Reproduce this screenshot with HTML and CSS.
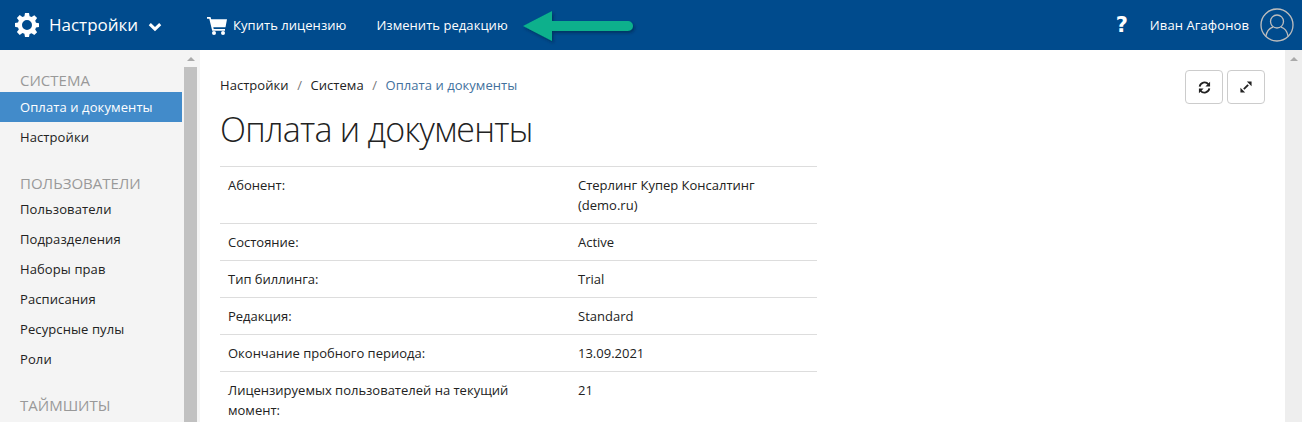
FILE: index.html
```html
<!DOCTYPE html>
<html lang="ru">
<head>
<meta charset="utf-8">
<title>Оплата и документы</title>
<link rel="stylesheet" href="styles.css">
</head>
<body>
<header class="topbar">
  <div class="brand">
    <svg class="gear" viewBox="0 0 24 24"><path fill="#fff" fill-rule="evenodd" d="M10 0h4l.6 3.200 2 .8L19.300 2.200l2.800 2.800L20.200 7.700l.8 2L24 10.200v3.800l-3 .6-.8 2 1.900 2.700-2.800 2.800-2.700-1.900-2 .8L14 24h-4l-.6-3.200-2-.8-2.700 1.900-2.800-2.800 1.900-2.700-.8-2L0 13.800v-3.800l3-.5.8-2L1.900 4.900l2.800-2.800L7.400 4l2-.8zM12 7a5 5 0 1 0 0 10 5 5 0 0 0 0-10z"/></svg>
    <span class="brand-name">Настройки</span>
    <svg class="chev" viewBox="0 0 14 10"><path d="M1.800 2.200 7 7.200l5.200-5" fill="none" stroke="#fff" stroke-width="3"/></svg>
  </div>
  <nav class="topnav">
    <a class="toplink"><svg class="cart" viewBox="0 0 20 18"><path fill="#fff" d="M0 0h3.500l.7 2.200H20l-1.500 8H6.300l.4 1.800H18v1.800H5.200L2.300 1.800H0z"/><circle fill="#fff" cx="7" cy="16" r="2"/><circle fill="#fff" cx="16" cy="16" r="2"/></svg>Купить лицензию</a>
    <a class="toplink">Изменить редакцию</a>
  </nav>
  <div class="topright">
    <span class="help">?</span>
    <span class="username">Иван Агафонов</span>
    <svg class="avatar" viewBox="0 0 34 34"><g fill="none" stroke="#bdbdbd" stroke-width="1.300"><circle cx="17" cy="17" r="16"/><circle cx="17" cy="13.500" r="6.500"/><path d="M6 28c1-5.500 4-8 7-8.800M28 28c-1-5.500-4-8-7-8.800"/></g></svg>
  </div>
  <svg class="arrow" viewBox="0 0 120 36"><defs><filter id="sh" x="-10%" y="-20%" width="125%" height="160%"><feDropShadow dx="1.500" dy="2" stdDeviation="1.500" flood-color="#00213f" flood-opacity=".55"/></filter></defs><path filter="url(#sh)" fill="#08b08c" d="M1 16 30 1v10h76a5 5 0 0 1 0 10H30v10z"/></svg>
</header>
<div class="layout">
  <aside class="sidebar">
    <div class="menu">
      <div class="menu-head first">СИСТЕМА</div>
      <a class="menu-item active">Оплата и документы</a>
      <a class="menu-item">Настройки</a>
      <div class="menu-head spaced">ПОЛЬЗОВАТЕЛИ</div>
      <a class="menu-item">Пользователи</a>
      <a class="menu-item">Подразделения</a>
      <a class="menu-item">Наборы прав</a>
      <a class="menu-item">Расписания</a>
      <a class="menu-item">Ресурсные пулы</a>
      <a class="menu-item">Роли</a>
      <div class="menu-head spaced">ТАЙМШИТЫ</div>
    </div>
    <div class="scrollbar"><span class="scroll-up"></span><span class="scroll-thumb"></span></div>
  </aside>
  <main class="content">
    <div class="crumb-row">
      <div class="crumbs"><span>Настройки</span><i>/</i><span>Система</span><i>/</i><span class="current">Оплата и документы</span></div>
      <div class="tools">
        <button class="tool"><svg viewBox="0 0 14 14"><g fill="none" stroke="#222" stroke-width="2"><path d="M1.800 6a5.300 5.300 0 0 1 9.400-2.500M12.200 8a5.300 5.300 0 0 1-9.400 2.500"/></g><path fill="#222" d="M13 .8v5H8zM1 13.200v-5h5z"/></svg></button>
        <button class="tool"><svg class="small" viewBox="0 0 14 14"><path stroke="#222" stroke-width="2.200" d="M4.500 9.500l5-5"/><path fill="#222" d="M8 .5h5.500V6zM.5 8v5.500H6z"/></svg></button>
      </div>
    </div>
    <h1 class="title">Оплата и документы</h1>
    <table class="details">
      <tr><td>Абонент:</td><td>Стерлинг Купер Консалтинг (demo.ru)</td></tr>
      <tr><td>Состояние:</td><td>Active</td></tr>
      <tr><td>Тип биллинга:</td><td>Trial</td></tr>
      <tr><td>Редакция:</td><td>Standard</td></tr>
      <tr><td>Окончание пробного периода:</td><td>13.09.2021</td></tr>
      <tr><td>Лицензируемых пользователей на текущий момент:</td><td>21</td></tr>
    </table>
  </main>
  <div class="page-scroll"><span class="scroll-up"></span></div>
</div>
</body>
</html>
```
FILE: styles.css
```css
* { box-sizing: border-box; }
html, body { margin: 0; height: 100%; overflow: hidden; }
body { font-family: "Open Sans", "Noto Sans", sans-serif; font-size: 13px; line-height: 20px; color: #222; background: #fff; }
.topbar { position: relative; height: 50px; background: #004b8d; color: #fff; display: flex; align-items: center; padding-left: 15px; }
.brand { display: flex; align-items: center; width: 192px; flex: none; }
.gear { width: 24px; height: 24px; margin-right: 10px; }
.brand-name { font-size: 17px; }
.chev { width: 14px; height: 10px; margin: 3px 0 0 10px; }
.topnav { display: flex; gap: 30px; }
.toplink { display: flex; align-items: center; font-size: 13px; font-weight: 500; letter-spacing: .05px; }
.cart { width: 20px; height: 18px; margin: 2px 6px 0 0; }
.topright { margin-left: auto; display: flex; align-items: center; padding-right: 8px; }
.help { font-family: "DejaVu Sans", sans-serif; font-size: 21px; font-weight: 700; margin-right: 22px; }
.username { margin-right: 11px; font-weight: 500; letter-spacing: .1px; }
.avatar { width: 34px; height: 34px; }
.arrow { position: absolute; left: 522px; top: 10px; width: 120px; height: 36px; }
.layout { display: flex; height: 372px; }
.sidebar { width: 200px; flex: none; background: #f4f4f4; display: flex; overflow: hidden; }
.menu { width: 182px; flex: none; padding-top: 20px; }
.menu-head { font-size: 15px; color: #999; line-height: 20px; padding-left: 20px; }
.menu-head.first { margin-bottom: 2px; }
.menu-head.spaced { margin-top: 21px; margin-bottom: 1px; }
.menu-item { display: block; height: 30px; line-height: 30px; padding-left: 20px; color: #222; letter-spacing: .1px; }
.menu-item.active { background: #428bca; color: #fff; }
.scrollbar { width: 13px; margin-left: 2px; display: flex; flex-direction: column; align-items: center; padding-top: 7px; }
.scroll-up { width: 0; height: 0; border: 4px solid transparent; border-top: 0; border-bottom: 4px solid #aaa; flex: none; }
.scroll-thumb { display: block; width: 13px; flex: 1; margin-top: 6px; background: #c1c1c1; }
.content { flex: 1; padding: 20px 20px 0; min-width: 0; }
.crumb-row { display: flex; justify-content: space-between; height: 34px; }
.crumbs { padding-top: 5px; letter-spacing: .05px; }
.crumbs i { font-style: normal; color: #777; margin: 0 8.500px; }
.current { color: #42719d; }
.tools { display: flex; gap: 4px; }
.tool { width: 38px; height: 34px; padding: 0; background: #fff; border: 1px solid #ccc; border-radius: 4px; display: flex; align-items: center; justify-content: center; }
.tool svg { width: 13px; height: 13px; }
.tool svg.small { width: 12px; height: 12px; }
.title { font-size: 34px; line-height: 44px; font-weight: 300; letter-spacing: -.75px; margin: 3px 0 15px; color: #222; }
.details { width: 597px; border-collapse: collapse; table-layout: fixed; }
.details td { border-top: 1px solid #ddd; padding: 8px; vertical-align: top; }
.details td:first-child { width: 350px; }
.page-scroll { width: 17px; flex: none; background: #eee; display: flex; justify-content: center; padding-top: 7px; align-items: flex-start; }
```
